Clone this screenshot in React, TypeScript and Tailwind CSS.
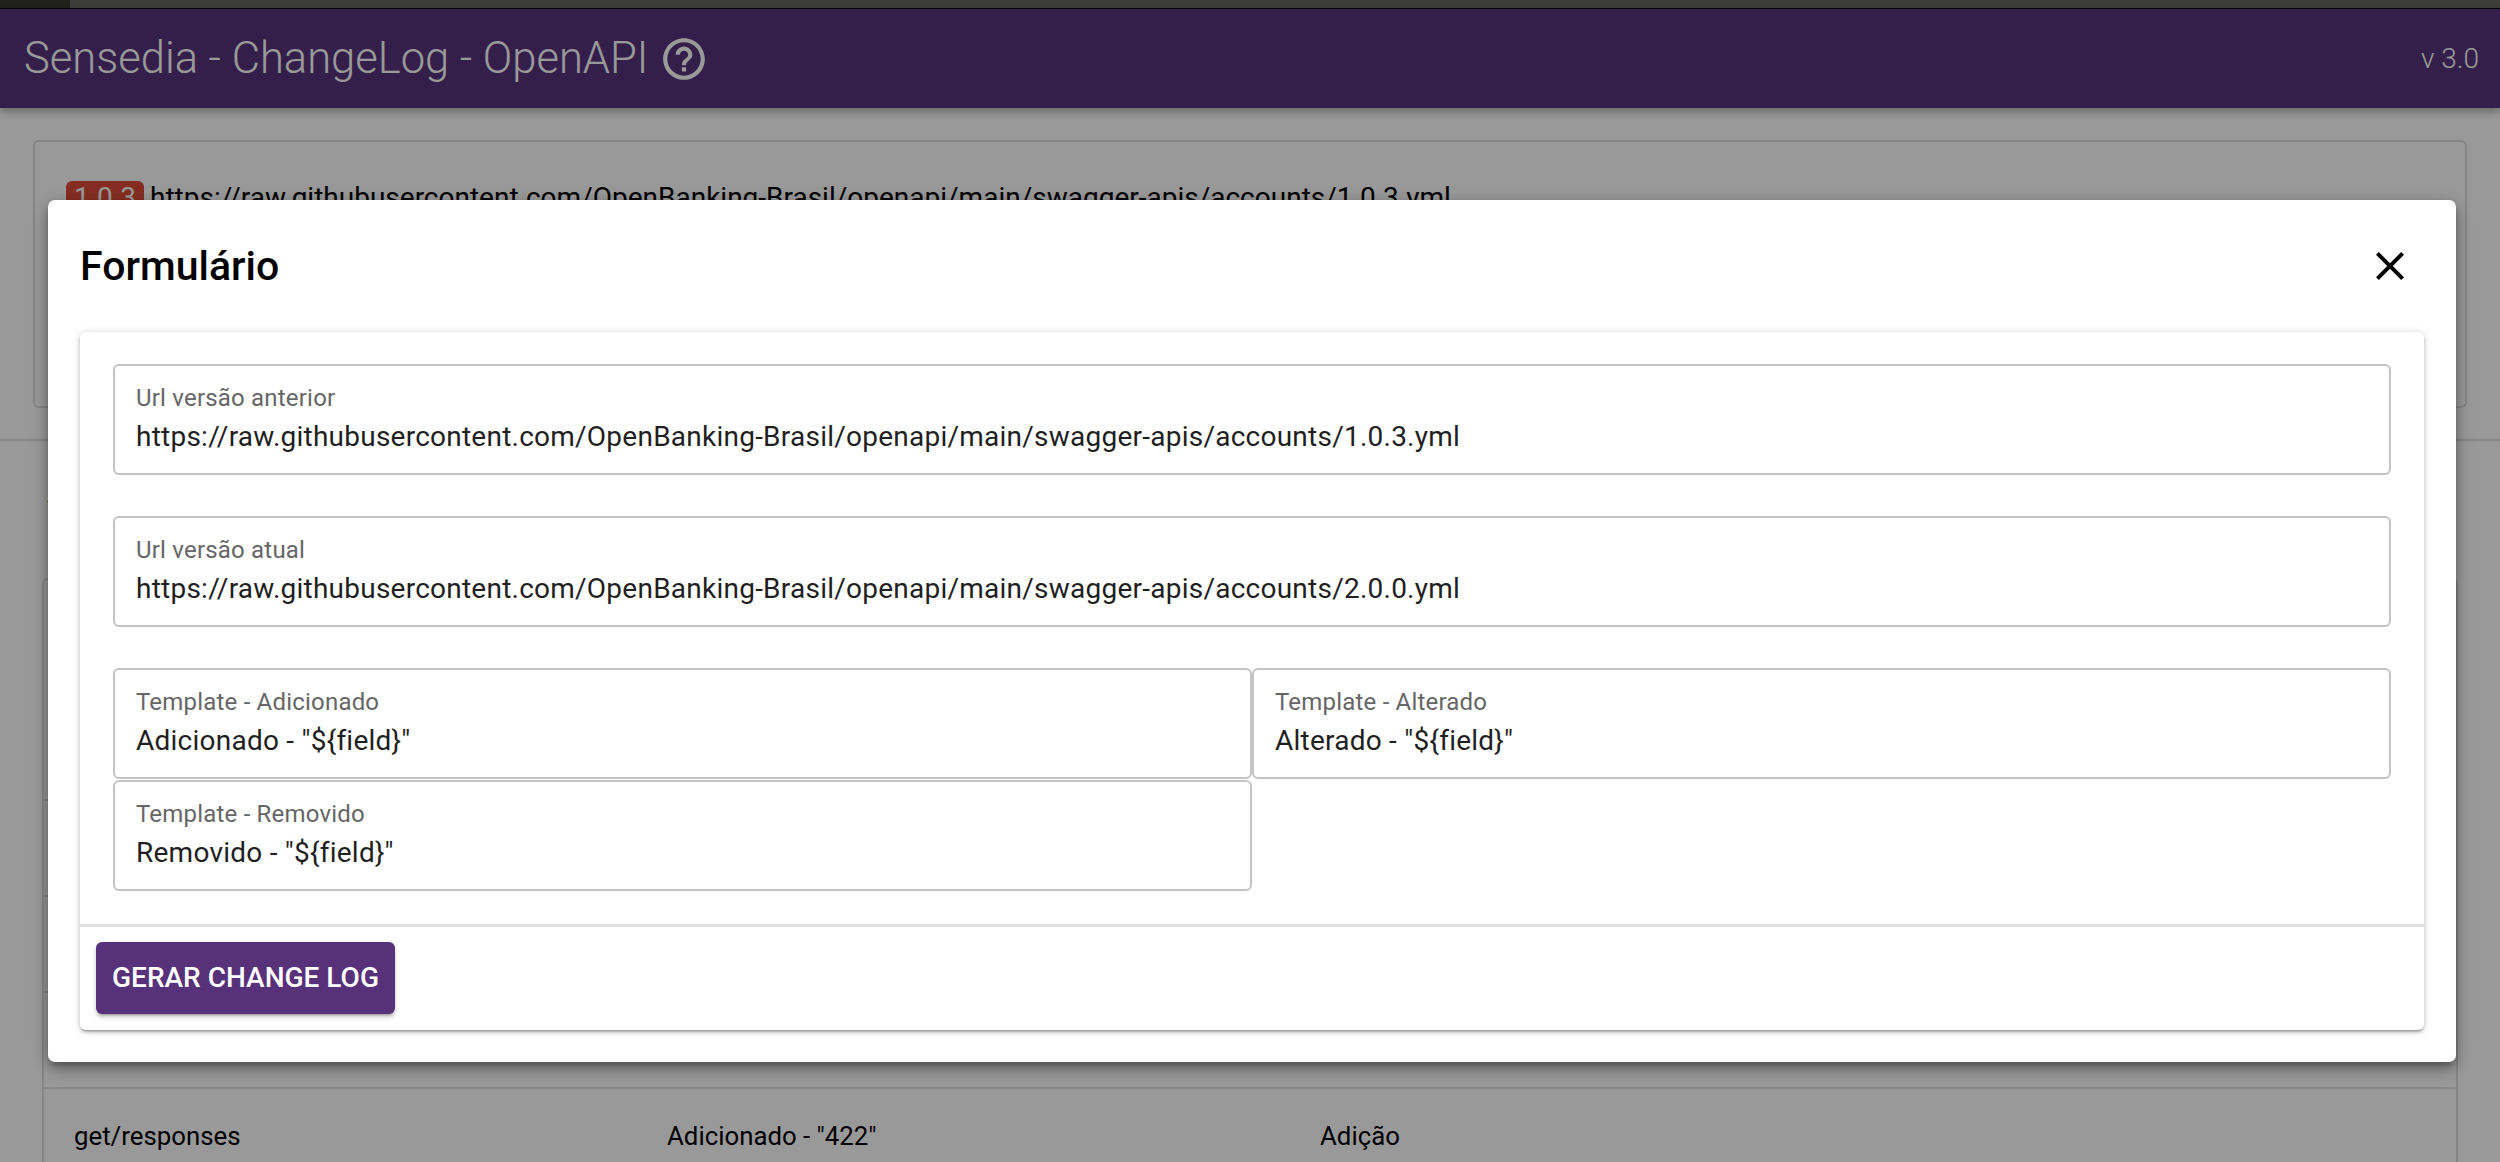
import React from "react";

const URL_A = "https://raw.githubusercontent.com/OpenBanking-Brasil/openapi/main/swagger-apis/accounts/1.0.3.yml";
const URL_B = "https://raw.githubusercontent.com/OpenBanking-Brasil/openapi/main/swagger-apis/accounts/2.0.0.yml";

function Field({ label, value }: { label: string; value: string }) {
  return (
    <label className="block h-[111px] rounded-[6px] border-2 border-[#c4c4c4] bg-white pl-[21px] pr-[21px] pt-[19px]">
      <span className="block text-[24px] leading-[26px] tracking-[0.2px] text-[#666666]">{label}</span>
      <input
        readOnly
        value={value}
        className="mt-[9px] block h-[34px] w-full bg-transparent text-[28px] leading-[34px] tracking-[0.24px] text-[#1f1f1f] outline-none"
      />
    </label>
  );
}

function Row({ a, b, c }: { a?: string; b?: string; c?: string }) {
  return (
    <div className="grid h-[96px] grid-cols-[593px_653px_1fr] items-center border-b-2 border-[#e0e0e0] pl-[30px] text-[25.8px] text-black">
      <span>{a}</span>
      <span>{b}</span>
      <span>{c}</span>
    </div>
  );
}

export default function App() {
  return (
    <div className="relative h-[1162px] w-full overflow-hidden bg-white font-['Roboto',sans-serif]">
      {/* top browser strip */}
      <div className="flex h-[8px]">
        <div className="w-[70px] bg-[#37392b]" />
        <div className="flex-1 bg-[#666760]" />
      </div>
      <div className="h-px bg-black" />

      {/* app bar */}
      <header className="relative z-10 flex h-[99px] items-center justify-between bg-[#57347d] pl-[24px] pr-[21px] text-white shadow-[0_4px_8px_rgba(0,0,0,0.3)]">
        <div className="flex items-center gap-[11px]">
          <h1 className="text-[43.5px] font-light leading-none">Sensedia - ChangeLog - OpenAPI</h1>
          <svg viewBox="0 0 24 24" className="h-[50px] w-[50px] fill-current">
            <path d="M11 18h2v-2h-2v2zm1-16C6.48 2 2 6.48 2 12s4.48 10 10 10 10-4.48 10-10S17.52 2 12 2zm0 18c-4.41 0-8-3.59-8-8s3.59-8 8-8 8 3.59 8 8-3.59 8-8 8zm0-14c-2.21 0-4 1.79-4 4h2c0-1.1.9-2 2-2s2 .9 2 2c0 2-3 1.75-3 5h2c0-2.25 3-2.5 3-5 0-2.21-1.79-4-4-4z" />
          </svg>
        </div>
        <span className="text-[28px] font-light">v 3.0</span>
      </header>

      {/* page behind the dialog */}
      <section className="h-[333px] border-b-2 border-[#e0e0e0] px-[33px] pt-[32px]">
        <div className="h-[268px] rounded-[6px] border-2 border-[#e0e0e0] pl-[31px] pt-[39px]">
          <div className="flex items-center gap-[6px] text-[28px] leading-[34px] text-black">
            <span className="rounded-[6px] bg-[#e04c3a] px-[8px] text-white">1.0.3</span>
            <span>{URL_A}</span>
          </div>
        </div>
      </section>
      <p className="pl-[46px] pt-[38px] text-[25.6px] leading-[30px] text-black">.</p>
      <main className="mx-[42px] mt-[69px] rounded-t-[6px] border-x-2 border-t-2 border-[#e0e0e0]">
        <div className="h-[221px] border-b-2 border-[#e0e0e0]" />
        <Row />
        <Row />
        <Row />
        <Row a="get/responses" b={'Adicionado - "422"'} c="Adição" />
      </main>

      {/* backdrop */}
      <div className="absolute inset-0 z-20 bg-black/40" />

      {/* dialog */}
      <div className="absolute left-[48px] top-[200px] z-30 h-[862px] w-[2408px] rounded-[7px] bg-white shadow-[0_5px_8px_-2px_rgba(0,0,0,0.35),0_8px_16px_rgba(0,0,0,0.2),0_2px_20px_rgba(0,0,0,0.12)]">
        <div className="flex h-[132px] items-center justify-between pl-[32px] pr-[42px]">
          <h2 className="text-[41px] font-medium leading-none text-black">Formulário</h2>
          <button aria-label="Fechar" className="flex h-[48px] w-[48px] items-center justify-center text-black">
            <svg viewBox="0 0 24 24" className="h-[48px] w-[48px] fill-current">
              <path d="M19 6.41 17.59 5 12 10.59 6.41 5 5 6.41 10.59 12 5 17.59 6.41 19 12 13.41 17.59 19 19 17.59 13.41 12z" />
            </svg>
          </button>
        </div>

        <div className="mx-[32px] h-[698px] rounded-[6px] bg-white shadow-[0_3px_3px_-2px_rgba(0,0,0,0.35),0_2px_4px_rgba(0,0,0,0.16),0_1px_8px_rgba(0,0,0,0.14)]">
          <div className="flex h-[595px] flex-col gap-[41px] border-b-[3px] border-[#e0e0e0] px-[33px] pt-[32px]">
            <Field label="Url versão anterior" value={URL_A} />
            <Field label="Url versão atual" value={URL_B} />
            <div className="grid grid-cols-2 content-start gap-y-[1px]">
              <Field label="Template - Adicionado" value={'Adicionado - "${field}"'} />
              <Field label="Template - Alterado" value={'Alterado - "${field}"'} />
              <Field label="Template - Removido" value={'Removido - "${field}"'} />
            </div>
          </div>
          <div className="pl-[16px] pt-[15px]">
            <button className="h-[72px] w-[299px] rounded-[6px] bg-[#57317a] text-[28px] font-medium uppercase text-white shadow-[0_3px_3px_-2px_rgba(0,0,0,0.3),0_3px_5px_rgba(0,0,0,0.2)]">
              Gerar Change Log
            </button>
          </div>
        </div>
      </div>
    </div>
  );
}
